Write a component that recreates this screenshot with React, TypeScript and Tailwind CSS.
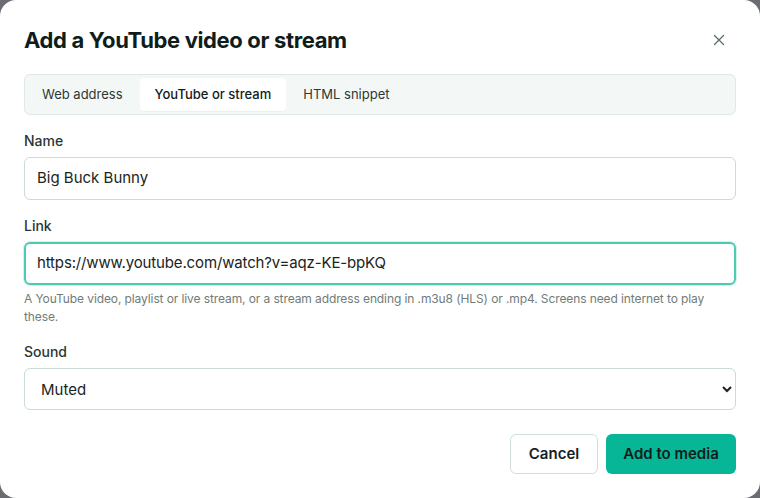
import React from "react";

export default function App() {
  return (
    <div className="w-[760px] h-[498px] bg-[#6b6b72] overflow-hidden" style={{ fontFamily: "Inter, 'Noto Sans', sans-serif" }}>
      <div className="w-full h-full bg-white rounded-[16px] flex flex-col px-6 pt-[25px]">
        <div className="flex items-center justify-between h-[30px]">
          <h1 className="text-[22px] font-bold text-[#0f1d1a] tracking-[-0.35px] leading-[30px]">Add a YouTube video or stream</h1>
          <button className="w-6 h-6 flex items-center justify-center mr-[5px] text-[#5d6e6a]">
            <svg width="12" height="12" viewBox="0 0 12 12" fill="none" stroke="currentColor" strokeWidth="1.3" strokeLinecap="round">
              <path d="M1.5 1.5 L10.5 10.5 M10.5 1.5 L1.5 10.5" />
            </svg>
          </button>
        </div>

        <div className="mt-[19px] h-[41px] bg-[#f3f8f7] border border-[#dde9e6] rounded-[6px] flex items-center pl-[2px] gap-[2px]">
          <div className="h-[33px] px-[15px] flex items-center text-[13px] text-[#2c3835]">Web address</div>
          <div className="h-[33px] px-[15px] flex items-center text-[13px] font-medium text-[#13211e] bg-white rounded-[4px] shadow-[0_1px_1px_rgba(0,0,0,0.03)]">YouTube or stream</div>
          <div className="h-[33px] px-[15px] flex items-center text-[13px] text-[#2c3835]">HTML snippet</div>
        </div>

        <label className="mt-4 text-[14px] font-medium leading-5 text-[#2a3633]">Name</label>
        <div className="mt-[6px] h-[43px] border border-[#c9dcd8] rounded-[6px] flex items-center px-3 text-[15px] text-[#1a2422]">Big Buck Bunny</div>

        <label className="mt-4 text-[14px] font-medium leading-5 text-[#2a3633]">Link</label>
        <div className="mt-[6px] h-[43px] border-2 border-[#4ccbb2] rounded-[6px] flex items-center px-[11px] text-[15px] tracking-[-0.15px] text-[#1a2422] shadow-[0_0_0_1px_rgba(76,203,178,0.25)]">https://www.youtube.com/watch?v=aqz-KE-bpKQ</div>
        <p className="mt-[5px] text-[12px] leading-[18px] tracking-[-0.1px] pr-[24px] text-[#707c79]">A YouTube video, playlist or live stream, or a stream address ending in .m3u8 (HLS) or .mp4. Screens need internet to play these.</p>

        <label className="mt-4 text-[14px] font-medium leading-5 text-[#2a3633]">Sound</label>
        <select className="mt-[6px] h-[42px] border border-[#c9dcd8] rounded-[6px] px-3 text-[15px] text-[#1a2422] bg-white" defaultValue="muted" style={{ fontFamily: "Inter, sans-serif" }}>
          <option value="muted">Muted</option>
          <option value="on">On</option>
        </select>

        <div className="mt-[24px] flex justify-end gap-2">
          <button className="h-[40px] w-[88px] border border-[#cfe0dc] rounded-[6px] bg-white text-[15px] font-semibold text-[#16211f]">Cancel</button>
          <button className="h-[40px] w-[130px] rounded-[6px] bg-[#07b597] text-[15px] font-semibold text-[#0f1d1a]">Add to media</button>
        </div>
      </div>
    </div>
  );
}
